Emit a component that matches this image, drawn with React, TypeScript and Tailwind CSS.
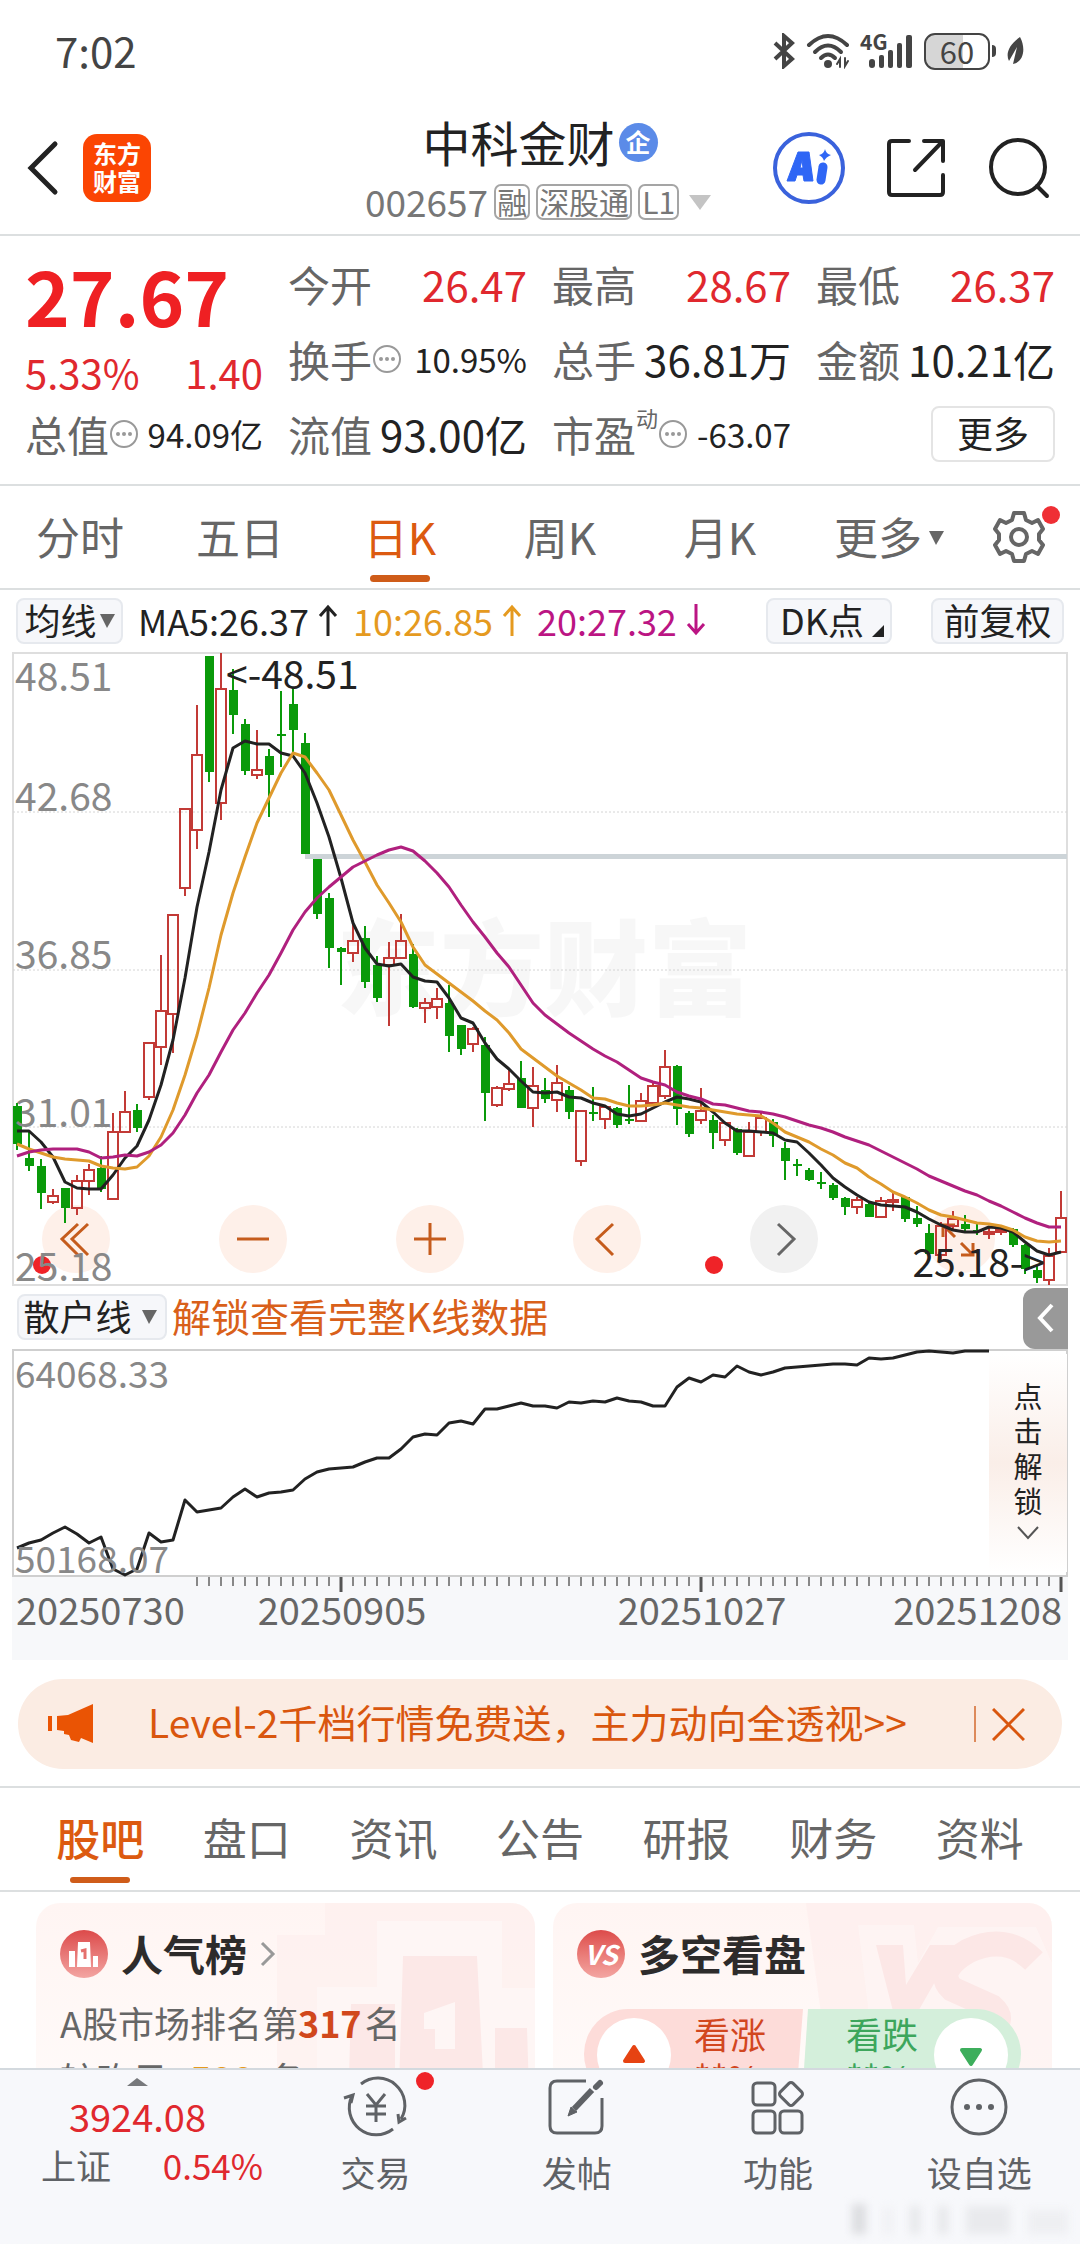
import React from "react";

type Candle = [kind: "r" | "g", high: number, top: number, bottom: number, low: number];

// candles in chart units, oldest first
const CANDLES: Candle[] = [
  ["g", 451, 454, 492, 498], ["g", 478, 506, 514, 519], ["g", 507, 514, 541, 557], ["r", 537, 544, 550, 552],
  ["g", 536, 536, 556, 571], ["r", 523, 529, 556, 563], ["r", 512, 518, 529, 543], ["g", 504, 516, 537, 540],
  ["r", 461, 480, 547, 547], ["r", 439, 460, 480, 480], ["g", 452, 458, 476, 480], ["r", 391, 391, 445, 448],
  ["r", 303, 359, 395, 413], ["r", 263, 263, 362, 401], ["r", 157, 157, 236, 244], ["r", 53, 103, 178, 197],
  ["g", 4, 4, 120, 130], ["r", 1, 37, 151, 168], ["g", 17, 38, 63, 82], ["g", 67, 72, 119, 123],
  ["r", 78, 118, 123, 127], ["g", 97, 104, 123, 165], ["g", 39, 82, 83, 115], ["g", 35, 52, 78, 103],
  ["g", 81, 91, 202, 202], ["g", 207, 207, 262, 267], ["g", 241, 246, 296, 316], ["g", 295, 296, 300, 333],
  ["r", 271, 289, 301, 310], ["g", 274, 286, 330, 336], ["g", 304, 313, 346, 350], ["r", 290, 306, 313, 374],
  ["r", 262, 289, 306, 306], ["g", 292, 302, 355, 356], ["r", 346, 351, 356, 371], ["r", 336, 347, 355, 367],
  ["g", 333, 351, 384, 400], ["g", 373, 373, 397, 403], ["r", 375, 377, 392, 400], ["g", 385, 393, 441, 469],
  ["r", 434, 436, 453, 455], ["r", 417, 432, 437, 439], ["g", 409, 426, 456, 456], ["r", 415, 434, 456, 475],
  ["g", 426, 438, 447, 451], ["r", 413, 431, 448, 460], ["g", 434, 438, 460, 467], ["r", 459, 459, 509, 514],
  ["g", 435, 460, 461, 469], ["r", 453, 455, 467, 477], ["g", 455, 456, 473, 476], ["g", 433, 467, 468, 472],
  ["r", 441, 449, 469, 469], ["r", 431, 434, 451, 451], ["r", 398, 415, 444, 447], ["g", 413, 414, 457, 473],
  ["g", 459, 461, 482, 485], ["r", 436, 459, 468, 472], ["g", 463, 468, 481, 497], ["r", 470, 471, 488, 494],
  ["g", 476, 477, 501, 503], ["r", 470, 480, 504, 504], ["r", 460, 466, 480, 484], ["g", 467, 470, 484, 495],
  ["g", 490, 496, 509, 528], ["g", 507, 512, 513, 524], ["g", 516, 518, 528, 529], ["g", 520, 530, 531, 537],
  ["g", 531, 533, 546, 548], ["g", 545, 546, 555, 563], ["r", 545, 548, 555, 562], ["g", 551, 552, 565, 565],
  ["r", 545, 549, 565, 566], ["r", 541, 548, 549, 559], ["g", 544, 545, 567, 570], ["g", 554, 566, 572, 575],
  ["g", 572, 581, 602, 603], ["r", 570, 574, 603, 608], ["r", 559, 567, 574, 577], ["g", 563, 572, 577, 579],
  ["g", 571, 578, 579, 583], ["r", 575, 580, 581, 587], ["r", 574, 578, 579, 583], ["g", 576, 577, 593, 595],
  ["g", 592, 593, 617, 622], ["g", 614, 618, 626, 631], ["r", 596, 604, 628, 633], ["r", 539, 566, 600, 600],
];

const MA5 = [
  479, 479, 490, 505, 530, 536, 537, 537, 523, 506, 494, 468, 433, 388, 326, 255, 200, 138, 96, 89, 92, 92, 101, 104,
  121, 151, 185, 226, 271, 296, 312, 314, 312, 325, 329, 330, 346, 366, 371, 391, 407, 417, 429, 440, 441, 440, 445,
  446, 451, 454, 462, 464, 462, 456, 450, 445, 447, 450, 460, 471, 479, 479, 480, 481, 488, 490, 501, 513, 526, 535,
  543, 550, 553, 554, 555, 560, 567, 573, 578, 580, 580, 575, 576, 580, 590, 599, 603, 600,
];
const MA10 = [
  492, 497, 501, 505, 507, 508, 509, 514, 516, 517, 515, 504, 485, 458, 423, 383, 336, 283, 241, 205, 171, 146, 121,
  101, 105, 121, 138, 163, 188, 210, 233, 251, 270, 295, 313, 322, 331, 340, 349, 359, 368, 381, 397, 406, 415, 424,
  431, 438, 446, 447, 451, 454, 454, 453, 451, 453, 455, 456, 458, 460, 462, 463, 464, 471, 480, 485, 490, 497, 503,
  511, 516, 525, 532, 540, 545, 551, 558, 563, 565, 568, 571, 572, 574, 578, 585, 589, 590, 589,
];
const MA20 = [
  504, 500, 498, 497, 497, 497, 500, 506, 505, 503, 504, 500, 493, 481, 463, 441, 423, 400, 378, 361, 341, 323, 301,
  278, 260, 246, 235, 225, 215, 209, 203, 198, 195, 199, 209, 221, 235, 253, 270, 285, 301, 315, 333, 351, 363, 372,
  381, 389, 397, 404, 410, 418, 426, 430, 433, 440, 444, 447, 452, 453, 456, 459, 460, 462, 465, 469, 473, 476, 480,
  485, 489, 493, 499, 505, 511, 517, 524, 529, 534, 539, 543, 549, 554, 560, 566, 571, 575, 575,
];
const HOLDERS = [
  198, 193, 190, 183, 177, 184, 193, 187, 219, 225, 219, 183, 192, 190, 150, 162, 160, 158, 147, 139, 147, 143, 142,
  140, 129, 122, 119, 118, 117, 112, 108, 108, 99, 87, 84, 85, 73, 71, 74, 59, 59, 56, 53, 56, 56, 58, 52, 53, 51, 52,
  48, 51, 52, 56, 56, 37, 28, 32, 25, 27, 16, 22, 25, 22, 18, 17, 16, 15, 14, 14, 15, 8, 9, 8, 5, 2, 1, 2, 3, 1, 1, 1,
];

const xAt = (i: number) => 17 + i * 12;
const toPoints = (ys: number[]) => ys.map((y, i) => `${xAt(i)},${y}`).join(" ");

function StatusBar() {
  return (
    <div className="flex h-[102px] items-center justify-between pr-[54px] pl-[55px] text-[#444]">
      <span className="pb-[2px] text-[42px] leading-none">7:02</span>
      <div className="flex items-center gap-[10px]">
        <svg width="24" height="36" viewBox="0 0 24 36" fill="none" stroke="currentColor" strokeWidth="4">
          <path d="M3 10 L20 26 L12 33 V3 L20 10 L3 26" />
        </svg>
        <svg width="46" height="36" viewBox="0 0 46 36" fill="none" stroke="currentColor" strokeWidth="4" strokeLinecap="round">
          <path d="M3 12 Q22 -6 41 12" />
          <path d="M9 19 Q22 6 35 19" />
          <path d="M15 25 Q22 18 29 25" />
          <circle cx="22" cy="31" r="4" fill="currentColor" stroke="none" />
          <path d="M34 34 V26 L31 31 M39 25 V33 L42 28" strokeWidth="2" />
        </svg>
        <svg className="overflow-visible" width="52" height="36" viewBox="0 0 52 36" fill="currentColor">
          <text x="-2" y="17" fontSize="21" fontWeight="700">4G</text>
          <rect x="7" y="26" width="6" height="9" rx="3" />
          <rect x="17" y="22" width="5" height="13" rx="2" />
          <rect x="26" y="17" width="5" height="18" rx="2" />
          <rect x="35" y="10" width="5" height="25" rx="2" />
          <rect x="44" y="2" width="6" height="33" rx="2" />
        </svg>
        <div className="flex items-center gap-[2px]">
          <div className="flex h-[37px] w-[66px] items-center justify-center rounded-[11px] border-2 border-[#444] bg-linear-to-r from-[#d6d6d6] from-60% to-white to-60% pb-[2px] text-[31px] leading-none">
            60
          </div>
          <div className="h-[12px] w-[4px] rounded-r bg-[#444]" />
        </div>
        <svg width="20" height="30" viewBox="0 0 20 30" fill="currentColor">
          <path d="M14 1 C4 8 -1 17 3 25 L11 11 L7 28 C18 26 20 12 14 1 Z" />
        </svg>
      </div>
    </div>
  );
}

function Header() {
  return (
    <header className="flex h-[134px] items-center justify-between border-b-2 border-[#dcdfe0] pr-[30px] pl-[26px]">
      <div className="flex w-[277px] items-center gap-[24px]">
        <button aria-label="返回">
          <svg width="33" height="56" viewBox="0 0 33 56" fill="none" stroke="#222" strokeWidth="5" strokeLinecap="round">
            <path d="M29 4 L5 28 L29 52" />
          </svg>
        </button>
        <div className="flex h-[68px] w-[68px] flex-col items-center justify-center rounded-[14px] bg-[#fb4503] pb-[2px] text-[24px] leading-[28px] font-bold text-white">
          <span>东方</span>
          <span>财富</span>
        </div>
      </div>
      <div className="flex flex-col items-center gap-[11px] pb-[2px]">
        <div className="flex items-center gap-[4px] pl-[4px] text-[#222]">
          <h1 className="pb-[3px] text-[48px] leading-[56px]">中科金财</h1>
          <span className="flex h-[39px] w-[39px] items-center justify-center rounded-full bg-[#5b8be8] pb-[2px] text-[25px] leading-none font-bold text-white">
            企
          </span>
        </div>
        <div className="flex items-center gap-[6px] text-[30px] leading-none text-[#777]">
          <span className="pb-[2px] text-[37px]">002657</span>
          <span className="flex h-[36px] items-center rounded-[7px] border-2 border-[#a5a5a5] px-[1px] pb-[2px]">融</span>
          <span className="flex h-[36px] items-center rounded-[7px] border-2 border-[#a5a5a5] px-[1px] pb-[2px]">深股通</span>
          <span className="flex h-[36px] items-center rounded-[7px] border-2 border-[#a5a5a5] px-[2px] pb-[2px]">L1</span>
          <svg className="ml-[4px]" width="22" height="15" viewBox="0 0 22 15" fill="#c4c4c4">
            <path d="M0 0 H22 L11 15 Z" />
          </svg>
        </div>
      </div>
      <div className="flex w-[277px] items-center justify-between">
        <button aria-label="Ai">
          <svg width="72" height="72" viewBox="0 0 72 72" fill="none">
            <circle cx="36" cy="36" r="34" stroke="#3a62dc" strokeWidth="4" />
            <path d="M14 49 L25 20 H36 L40 49 H31 L30 43 H24 L22 49 Z M27 36 H30 L29 28 Z" fill="#2f66f5" fillRule="evenodd" stroke="#2f66f5" strokeLinejoin="round" />
            <path d="M50 35 L48 48" stroke="#2f66f5" strokeWidth="9" strokeLinecap="round" />
            <path d="M52 17 Q53 22 58 23 Q53 25 51 29 Q50 25 46 23 Q51 22 52 17Z" fill="#2f66f5" />
          </svg>
        </button>
        <button aria-label="分享">
          <svg width="60" height="60" viewBox="0 0 60 60" fill="none" stroke="#222" strokeWidth="4" strokeLinecap="round" strokeLinejoin="round">
            <path d="M23 3 H6 Q3 3 3 6 V54 Q3 57 6 57 H54 Q57 57 57 54 V37" />
            <path d="M38 3 H57 V23 M56 4 L29 32" />
          </svg>
        </button>
        <button aria-label="搜索">
          <svg width="62" height="62" viewBox="0 0 62 62" fill="none" stroke="#222" strokeWidth="4" strokeLinecap="round">
            <circle cx="30" cy="30" r="27" />
            <path d="M49 49 L59 59" />
          </svg>
        </button>
      </div>
    </header>
  );
}

function Info() {
  return (
    <svg className="shrink-0" width="30" height="30" viewBox="0 0 30 30" fill="#999">
      <circle cx="15" cy="15" r="13" fill="none" stroke="#999" strokeWidth="2" />
      <circle cx="9" cy="15" r="2" />
      <circle cx="15" cy="15" r="2" />
      <circle cx="21" cy="15" r="2" />
    </svg>
  );
}

type QuoteProps = { label: string; value: string; up?: boolean; info?: boolean; sup?: string };

function Quote({ label, value, up, info, sup }: QuoteProps) {
  return (
    <div className="flex h-[75px] items-center justify-between pb-[3px] leading-none whitespace-nowrap">
      <div className="flex items-center text-[42px] text-[#666]">
        <span>{label}</span>
        {sup && <span className="-mt-[34px] text-[22px]">{sup}</span>}
        {info && <Info />}
      </div>
      <span className={`${info ? "text-[33px]" : "text-[42px]"} ${up ? "text-[#e0282e]" : "text-[#222]"}`}>{value}</span>
    </div>
  );
}

function Quotes() {
  return (
    <section className="grid h-[250px] grid-cols-[238px_repeat(3,1fr)] gap-x-[25px] border-b-2 border-[#dcdfe0] px-[25px] pt-[12px]">
      <div>
        <div className="flex h-[98px] items-center pb-[6px] text-[76px] leading-none font-bold text-[#ef2023]">27.67</div>
        <div className="flex h-[52px] items-center justify-between text-[40px] leading-none text-[#e0282e]">
          <span>5.33%</span>
          <span>1.40</span>
        </div>
        <Quote label="总值" value="94.09亿" info />
      </div>
      <div>
        <Quote label="今开" value="26.47" up />
        <Quote label="换手" value="10.95%" info />
        <Quote label="流值" value="93.00亿" />
      </div>
      <div>
        <Quote label="最高" value="28.67" up />
        <Quote label="总手" value="36.81万" />
        <Quote label="市盈" value="-63.07" info sup="动" />
      </div>
      <div>
        <Quote label="最低" value="26.37" up />
        <Quote label="金额" value="10.21亿" />
        <div className="flex h-[75px] items-center justify-end">
          <button className="mb-[4px] h-[56px] w-[124px] rounded-[8px] border-2 border-[#e4e4e4] pb-[4px] text-[36px] leading-none text-[#222]">更多</button>
        </div>
      </div>
    </section>
  );
}

function Triangle() {
  return (
    <svg className="mt-[3px]" width="15" height="14" viewBox="0 0 15 14" fill="#666">
      <path d="M0 0 H15 L7 14 Z" />
    </svg>
  );
}

function PeriodTabs() {
  return (
    <nav className="flex h-[104px] items-stretch border-b-2 border-[#dcdfe0] pr-[34px] text-[44px] leading-none text-[#666]">
      {["分时", "五日", "日K", "周K", "月K"].map((tab) => (
        <button key={tab} className={`relative flex-1 pb-[2px] ${tab === "日K" ? "text-[#dc5a10]" : ""}`}>
          {tab}
          {tab === "日K" && <span className="absolute bottom-[6px] left-1/2 h-[7px] w-[60px] -translate-x-1/2 rounded-full bg-[#cf5c19]" />}
        </button>
      ))}
      <button className="flex flex-1 items-center justify-end pb-[2px]">
        <span className="flex items-center gap-[7px] pr-[16px]">
          更多
          <Triangle />
        </span>
      </button>
      <button aria-label="设置" className="relative flex w-[86px] items-center justify-end">
        <svg width="54" height="54" viewBox="0 0 54 54" fill="none" stroke="#666" strokeWidth="4" strokeLinejoin="round">
          <path d="M22 3 H32 L34 10 L40 13 L46 10 L51 19 L47 24 V30 L51 35 L46 44 L40 41 L34 44 L32 51 H22 L20 44 L14 41 L8 44 L3 35 L7 30 V24 L3 19 L8 10 L14 13 L20 10 Z" />
          <circle cx="27" cy="27" r="8" />
        </svg>
        <span className="absolute top-[20px] -right-[14px] h-[18px] w-[18px] rounded-full bg-[#ef2f35]" />
      </button>
    </nav>
  );
}

function Arrow({ down }: { down?: boolean }) {
  return (
    <svg className={down ? "rotate-180" : ""} width="20" height="32" viewBox="0 0 20 32" fill="none" stroke="currentColor" strokeWidth="3">
      <path d="M10 32 V3 M2 12 L10 3 L18 12" />
    </svg>
  );
}

function AverageRow() {
  return (
    <div className="flex h-[62px] items-center justify-between pr-[16px] pl-[16px] text-[36px] leading-none whitespace-nowrap text-[#222]">
      <div className="flex items-center gap-[15px]">
        <button className="flex h-[46px] w-[107px] items-center justify-center gap-[3px] rounded-[8px] border-2 border-[#e6e9ee] bg-[#f6f7fa] pb-[4px]">
          均线
          <Triangle />
        </button>
        <span className="flex items-center gap-[9px] pb-[3px]">MA5:26.37<Arrow /></span>
        <span className="flex items-center gap-[9px] pb-[3px] text-[#e59a1f]">10:26.85<Arrow /></span>
        <span className="flex items-center gap-[9px] pb-[3px] text-[#bb1583]">20:27.32<Arrow down /></span>
      </div>
      <div className="flex items-center gap-[39px]">
        <button className="flex h-[46px] w-[126px] items-center gap-[8px] rounded-[8px] border-2 border-[#e6e9ee] bg-[#f6f7fa] pb-[4px] pl-[12px]">
          DK点
          <svg className="mt-[24px]" width="12" height="12" viewBox="0 0 12 12" fill="#222">
            <path d="M12 0 V12 H0 Z" />
          </svg>
        </button>
        <button className="h-[46px] w-[133px] rounded-[8px] border-2 border-[#e6e9ee] bg-[#f6f7fa] pb-[4px]">前复权</button>
      </div>
    </div>
  );
}

const CONTROLS = [
  { label: "最早", path: "M36 19 L20 34 L36 50 M46 19 L30 34 L46 50", muted: false },
  { label: "缩小", path: "M18 34 H50", muted: false },
  { label: "放大", path: "M18 34 H50 M34 18 V50", muted: false },
  { label: "向左", path: "M40 19 L24 34 L40 50", muted: false },
  { label: "向右", path: "M28 19 L44 34 L28 50", muted: true },
  { label: "全屏", path: "M28 32 L16 20 M16 32 V20 H28 M34 38 L46 50 M46 38 V50 H34", muted: false },
];

function CandleChart() {
  return (
    <div className="relative">
      <div className="absolute bottom-[13px] left-[42px] flex gap-[109px]">
        {CONTROLS.map((c) => (
          <button key={c.label} aria-label={c.label} className={`h-[68px] w-[68px] rounded-full ${c.muted ? "bg-[#f1f1f1] text-[#666]" : "bg-[#fef0e9] text-[#c55c1d]"}`}>
            <svg width="68" height="68" viewBox="0 0 68 68" fill="none" stroke="currentColor" strokeWidth="3">
              <path d={c.path} />
            </svg>
          </button>
        ))}
      </div>
      <svg className="pointer-events-none relative block h-auto w-full overflow-visible" viewBox="0 0 1080 634" fill="none">
        <text x="336" y="356" fontSize="104" fontWeight="900" fill="#000" fillOpacity="0.03">东方财富</text>
        <rect x="13" y="1" width="1054" height="632" stroke="#dedede" strokeWidth="2" />
        {[160, 318, 475].map((y) => (
          <line key={y} x1="13" x2="1067" y1={y} y2={y} stroke="#d4d4d4" strokeDasharray="2 2" />
        ))}
        <rect x="305" y="202" width="762" height="5" fill="#cdd4d8" />
        {CANDLES.map(([kind, high, top, bottom, low], i) => {
          const x = xAt(i);
          const height = Math.max(bottom - top, 2);
          return kind === "g" ? (
            <g key={i}>
              <line x1={x} x2={x} y1={high} y2={low} stroke="#0a9a0a" strokeWidth="2" />
              <rect x={x - 4} y={top} width="9" height={height} fill="#0a9a0a" />
            </g>
          ) : (
            <g key={i} stroke="#c23a36" strokeWidth="2">
              <path d={`M${x} ${high}V${top}M${x} ${bottom}V${low}`} />
              <rect x={x - 5} y={top} width="10" height={height} />
            </g>
          );
        })}
        <polyline points={toPoints(MA5)} stroke="#222" strokeWidth="3" strokeLinejoin="round" />
        <polyline points={toPoints(MA10)} stroke="#df9a2c" strokeWidth="3" strokeLinejoin="round" />
        <polyline points={toPoints(MA20)} stroke="#b0207e" strokeWidth="3" strokeLinejoin="round" />
        <circle cx="42" cy="613" r="9" fill="#ef2328" />
        <circle cx="714" cy="613" r="9" fill="#ef2328" />
        <g fontSize="39" fill="#888">
          <text x="15" y="39">48.51</text>
          <text x="15" y="159">42.68</text>
          <text x="15" y="317">36.85</text>
          <text x="15" y="475">31.01</text>
          <text x="15" y="629">25.18</text>
        </g>
        <g fontSize="39" fill="#222">
          <text x="226" y="37">&lt;-48.51</text>
          <text x="1045" y="625" textAnchor="end">25.18-&gt;</text>
        </g>
      </svg>
    </div>
  );
}

function HolderChart() {
  const ticks = Array.from({ length: 73 }, (_, i) => i + 15);
  return (
    <>
      <div className="flex h-[64px] items-center justify-between pr-[12px] pl-[17px] leading-none">
        <div className="flex items-center gap-[5px] pb-[2px]">
          <button className="flex h-[46px] w-[150px] items-center justify-center gap-[10px] rounded-[8px] border-2 border-[#e6e9ee] bg-[#f6f7fa] pr-[4px] pb-[4px] text-[36px] text-[#222]">
            散户线
            <Triangle />
          </button>
          <a href="#unlock" className="pb-[4px] text-[39px] text-[#d9601a]">解锁查看完整K线数据</a>
        </div>
        <button aria-label="展开" className="flex h-[61px] w-[45px] items-center justify-center rounded-l-[12px] bg-[#999]">
          <svg width="18" height="30" viewBox="0 0 18 30" fill="none" stroke="#fff" strokeWidth="4">
            <path d="M15 2 L3 15 L15 28" />
          </svg>
        </button>
      </div>
      <div className="relative">
        <svg className="block h-auto w-full overflow-visible" viewBox="0 0 1080 310" fill="none">
          <rect x="12" y="227" width="1056" height="83" fill="#f7f8fa" />
          <rect x="13" y="0" width="1054" height="226" stroke="#cfcfcf" strokeWidth="2" />
          <polyline points={toPoints(HOLDERS)} stroke="#222" strokeWidth="3" strokeLinejoin="round" />
          {ticks.map((i) => {
            const major = i % 30 === 27;
            return <line key={i} x1={xAt(i)} x2={xAt(i)} y1="227" y2={major ? 242 : 236} stroke={major ? "#555" : "#888"} strokeWidth={major ? 3 : 2} />;
          })}
          <g fontSize="37" fill="#888">
            <text x="15" y="38">64068.33</text>
            <text x="15" y="223">50168.07</text>
          </g>
          <g fontSize="38" fill="#666">
            <text x="16" y="275">20250730</text>
            <text x="342" y="275" textAnchor="middle">20250905</text>
            <text x="702" y="275" textAnchor="middle">20251027</text>
            <text x="1062" y="275" textAnchor="end">20251208</text>
          </g>
        </svg>
        <button className="absolute top-[4px] right-[13px] flex h-[218px] w-[78px] flex-col items-center justify-center bg-linear-to-b from-white via-[#faeee8] to-white pb-[8px] text-[29px] leading-[35px] text-[#222]">
          <span>点</span>
          <span>击</span>
          <span>解</span>
          <span>锁</span>
          <svg className="mt-[8px]" width="22" height="14" viewBox="0 0 22 14" fill="none" stroke="#555" strokeWidth="2">
            <path d="M1 1 L11 12 L21 1" />
          </svg>
        </button>
      </div>
    </>
  );
}

function PromoBanner() {
  return (
    <div className="mx-[18px] mt-[19px] mb-[17px] flex h-[90px] items-center rounded-full bg-[#fbece3] pr-[37px] pl-[30px] text-[#d9560e]">
      <svg width="46" height="40" viewBox="0 0 46 40" fill="#ea5404">
        <rect x="0" y="12" width="4" height="15" />
        <path d="M9 12 L20 11 L45 0 V39 L33 34 L31 38 L23 36 L21 31 L16 30 V27 L9 26 Z" />
      </svg>
      <a href="#level2" className="ml-[54px] flex-1 pb-[6px] text-[39px] leading-none whitespace-nowrap">
        Level-2千档行情免费送，主力动向全透视&gt;&gt;
      </a>
      <span className="h-[36px] w-[2px] bg-[#dd8a5b]" />
      <button aria-label="关闭" className="ml-[16px]">
        <svg width="33" height="33" viewBox="0 0 33 33" fill="none" stroke="#d9560e" strokeWidth="3">
          <path d="M1 1 L32 32 M32 1 L1 32" />
        </svg>
      </button>
    </div>
  );
}

function SectionTabs() {
  return (
    <nav className="flex h-[106px] border-y-2 border-[#dcdfe0] px-[27px] text-[44px] leading-none text-[#666]">
      {["股吧", "盘口", "资讯", "公告", "研报", "财务", "资料"].map((tab, i) => (
        <button key={tab} className={`relative flex-1 pb-[4px] ${i === 0 ? "font-medium text-[#dc5a10]" : ""}`}>
          {tab}
          {i === 0 && <span className="absolute bottom-[7px] left-1/2 h-[6px] w-[60px] -translate-x-1/2 rounded-full bg-[#cf5c19]" />}
        </button>
      ))}
    </nav>
  );
}

function Cards() {
  return (
    <div className="grid grid-cols-2 gap-[18px] pt-[11px] pr-[28px] pl-[36px]">
      <section className="relative h-[250px] overflow-hidden rounded-[24px] bg-linear-to-b from-[#fff5f3] to-[#fffcfb] pt-[26px] pl-[24px]">
        <svg className="absolute top-0 right-0" width="258" height="250" viewBox="0 0 258 250">
          <path d="M48 0 H258 V250 H0 V32 H48 Z" fill="#fdeeec" fillOpacity="0.6" />
          <path d="M100 18 H225 V85 H258 V250 H40 V84 H100 Z" fill="#fef6f5" />
          <path d="M126 53 H200 L210 250 H120 Z M74 101 H118 V250 H70 Z M218 125 H250 L254 250 H218 Z" fill="#fce8e7" />
          <path d="M178 99 V146 H158 V126 H147 V110 Z" fill="#fef6f5" />
        </svg>
        <div className="relative flex h-[50px] items-center gap-[13px]">
          <svg width="48" height="48" viewBox="0 0 48 48">
            <defs>
              <linearGradient id="badge" x1="0" y1="0" x2="0" y2="1">
                <stop offset="0" stopColor="#dc4a4a" />
                <stop offset="1" stopColor="#f3a5a2" />
              </linearGradient>
            </defs>
            <circle cx="24" cy="24" r="24" fill="url(#badge)" />
            <path d="M18 12 H30 L31 37 H17 Z M9 21 H15 V37 H9 Z M33 26 H38 V37 H33 Z" fill="#fff" />
            <path d="M21 21 L25 20 V29" fill="none" stroke="#e5706d" strokeWidth="3" />
          </svg>
          <h2 className="pb-[2px] text-[42px] leading-none font-bold text-[#2d2b2b]">人气榜</h2>
          <svg width="16" height="26" viewBox="0 0 16 26" fill="none" stroke="#999" strokeWidth="3">
            <path d="M2 2 L13 13 L2 24" />
          </svg>
        </div>
        <p className="relative mt-[15px] text-[36px] leading-[56px] text-[#666]">
          A股市场排名第<b className="mr-[3px] text-[#d1481c]">317</b>名
        </p>
        <p className="relative text-[36px] leading-[56px] text-[#666]">
          较昨日 <b className="mx-[14px] text-[#e59a1f]">500</b>名
        </p>
      </section>
      <section className="relative h-[250px] overflow-hidden rounded-[24px] bg-linear-to-b from-[#fff5f3] to-[#fffcfb] pt-[26px] pl-[24px]">
        <svg className="absolute top-0 right-0" width="246" height="250" viewBox="0 0 246 250">
          <path d="M0 0 H246 V250 H34 Z" fill="#fdeeec" fillOpacity="0.7" />
          <path d="M52 22 H108 L112 60 L132 24 H230 L246 60 V250 H80 Z" fill="#fef5f4" fillOpacity="0.8" />
          <path d="M70 42 H97 L100 82 L124 42 H150 L110 112 H88 Z" fill="#fce7e6" />
          <path d="M228 58 Q200 30 162 48 Q128 68 146 86 L186 104 Q200 116 184 128" fill="none" stroke="#fce7e6" strokeWidth="25" />
        </svg>
        <div className="relative flex h-[50px] items-center gap-[13px]">
          <span className="flex h-[48px] w-[48px] items-center justify-center rounded-full bg-linear-to-b from-[#dc4a4a] to-[#f3a5a2] pb-[2px] text-[27px] leading-none font-bold text-white italic">VS</span>
          <h2 className="pb-[2px] text-[42px] leading-none font-bold text-[#2d2b2b]">多空看盘</h2>
        </div>
        <div className="relative mt-[28px] ml-[5px] flex h-[92px] w-[440px] text-[36px] leading-[52px]">
          <svg className="absolute inset-0" width="440" height="92" viewBox="0 0 440 92">
            <path d="M46 2 H221 L214 92 H46 A44 45 0 0 1 46 2 Z" fill="#fddcd9" />
            <path d="M226 2 H394 A45 45 0 0 1 394 92 H220 Z" fill="#d4efdb" />
            <circle cx="52" cy="48" r="37" fill="#fff" />
            <circle cx="389" cy="48" r="37" fill="#fff" />
            <path d="M52 40 L61 54 H43 Z" fill="#e64312" stroke="#e64312" strokeWidth="4" strokeLinejoin="round" />
            <path d="M389 57 L398 43 H380 Z" fill="#3dae5c" stroke="#3dae5c" strokeWidth="4" strokeLinejoin="round" />
          </svg>
          <button className="relative flex w-1/2 flex-col items-start pl-[112px] text-[#d2471f]">
            <span>看涨</span>
            <span className="leading-[34px]">**%</span>
          </button>
          <button className="relative flex w-1/2 flex-col items-start pl-[44px] text-[#3da65c]">
            <span>看跌</span>
            <span className="leading-[34px]">**%</span>
          </button>
        </div>
      </section>
    </div>
  );
}

const NAV_ITEMS = [
  {
    label: "交易",
    icon: (
      <>
        <path d="M19 8 A27 27 0 0 1 59 43 M64 42 L57 46 L56 38" />
        <path d="M51 53 A27 27 0 0 1 10 20 M2 22 L11 19 L9 27" />
        <path d="M25 18 L34 29 L43 18 M34 29 V46 M24 30 H44 M24 38 H44" />
      </>
    ),
  },
  {
    label: "发帖",
    icon: (
      <>
        <path d="M43 5 H14 Q7 5 7 12 V50 Q7 57 14 57 H52 Q59 57 59 50 V22" />
        <path d="M31 33 L49 14" strokeWidth="6" />
        <path d="M25 40 L28 31 L34 36 Z" fill="currentColor" strokeWidth="1" />
        <path d="M53 11 L57 7" strokeWidth="6" strokeLinecap="round" />
      </>
    ),
  },
  {
    label: "功能",
    icon: (
      <>
        <rect x="9" y="7" width="22" height="22" rx="4" />
        <rect x="9" y="35" width="22" height="22" rx="4" />
        <rect x="36" y="35" width="22" height="22" rx="4" />
        <rect x="38" y="9" width="18" height="18" rx="3" transform="rotate(45 47 18)" />
      </>
    ),
  },
  {
    label: "设自选",
    icon: (
      <>
        <circle cx="34" cy="31" r="27" />
        <g fill="currentColor" stroke="none">
          <circle cx="22" cy="31" r="3" />
          <circle cx="34" cy="31" r="3" />
          <circle cx="46" cy="31" r="3" />
        </g>
      </>
    ),
  },
];

function BottomBar() {
  return (
    <nav className="relative flex h-[176px] shrink-0 border-t-2 border-[#d3d9de] bg-[#f7f8fb] text-[#5f6266]">
      <button className="flex w-[275px] flex-col items-center pt-[8px] leading-none">
        <svg width="21" height="8" viewBox="0 0 21 8" fill="#77797c">
          <path d="M0 8 L10 0 L21 8 Z" />
        </svg>
        <span className="mt-[11px] text-[38px] text-[#e0282e]">3924.08</span>
        <span className="mt-[12px] flex w-full items-center justify-between pr-[12px] pl-[41px] text-[35px]">
          上证
          <span className="text-[#e0282e]">0.54%</span>
        </span>
      </button>
      {NAV_ITEMS.map((item, i) => (
        <button key={item.label} className="flex flex-1 flex-col items-center pt-[6px]">
          <span className="relative">
            <svg className="overflow-visible" width="68" height="62" viewBox="0 0 68 62" fill="none" stroke="currentColor" strokeWidth="3">
              {item.icon}
            </svg>
            {i === 0 && <span className="absolute -top-[4px] -right-[24px] h-[18px] w-[18px] rounded-full bg-[#ef2328]" />}
          </span>
          <span className="mt-[16px] text-[35px] leading-none">{item.label}</span>
        </button>
      ))}
      <div className="absolute right-[12px] bottom-[10px] flex h-[30px] items-end gap-[18px] blur-xs">
        <span className="h-[30px] w-[14px] bg-[#dcdde0]" />
        <span className="h-[26px] w-[8px] bg-[#eff0f3]" />
        <span className="h-[28px] w-[10px] bg-[#e6e7ea]" />
        <span className="h-[28px] w-[10px] bg-[#e6e7ea]" />
        <span className="h-[28px] w-[44px] bg-[#e9eaed]" />
        <span className="h-[24px] w-[40px] bg-[#eeeff2]" />
      </div>
    </nav>
  );
}

export default function App() {
  return (
    <div className="flex h-screen flex-col bg-white font-['Noto_Sans_CJK_SC',sans-serif]">
      <main className="min-h-0 flex-1 overflow-hidden">
        <StatusBar />
        <Header />
        <Quotes />
        <PeriodTabs />
        <AverageRow />
        <CandleChart />
        <HolderChart />
        <PromoBanner />
        <SectionTabs />
        <Cards />
      </main>
      <BottomBar />
    </div>
  );
}
